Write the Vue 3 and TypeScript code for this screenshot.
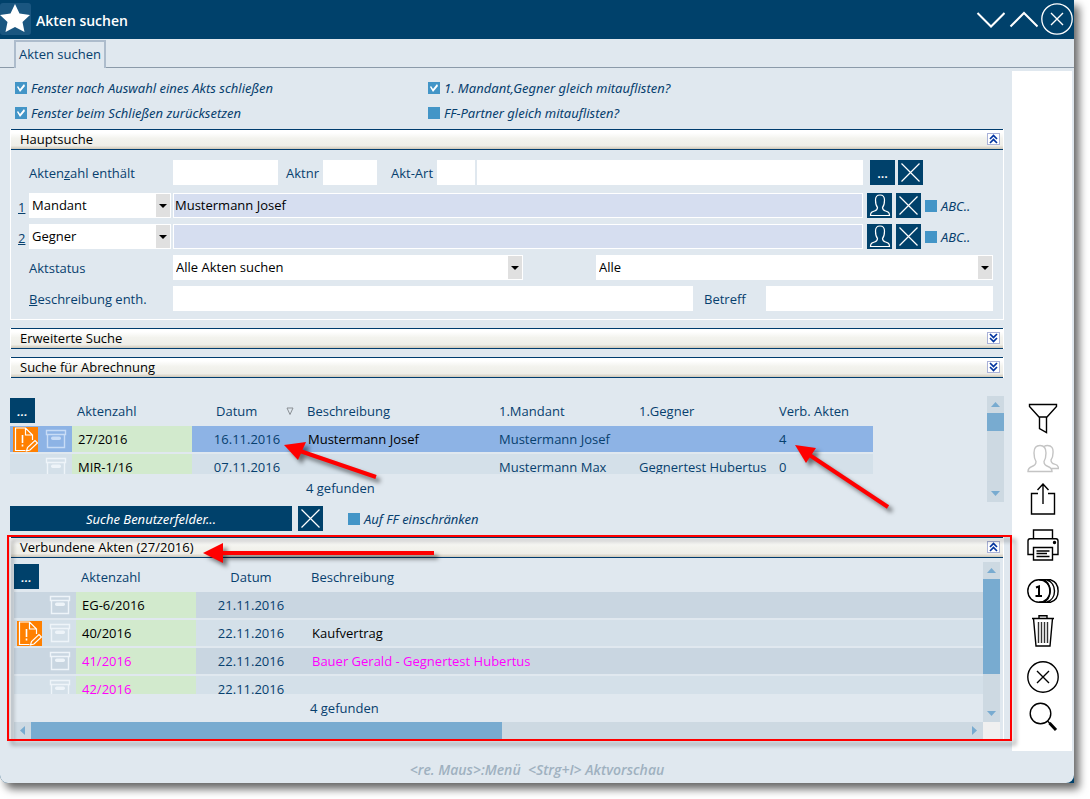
<script setup lang="ts">
import { ref } from 'vue'

interface CaseRow {
  no: string
  date: string
  text: string
  flagged: boolean
  related?: boolean
  client?: string
  opponent?: string
  links?: string
}

const closeAfterPick = ref(true)
const resetOnClose = ref(true)
const listParties = ref(true)
const listPartners = ref(false)
const limitToFf = ref(false)

const parties = ref([
  { key: '1', kind: 'Mandant', name: 'Mustermann Josef', abc: false },
  { key: '2', kind: 'Gegner', name: '', abc: false },
])

const results: CaseRow[] = [
  { no: '27/2016', date: '16.11.2016', text: 'Mustermann Josef', flagged: true, client: 'Mustermann Josef', opponent: '', links: '4' },
  { no: 'MIR-1/16', date: '07.11.2016', text: '', flagged: false, client: 'Mustermann Max', opponent: 'Gegnertest Hubertus', links: '0' },
]

const linked: CaseRow[] = [
  { no: 'EG-6/2016', date: '21.11.2016', text: '', flagged: false },
  { no: '40/2016', date: '22.11.2016', text: 'Kaufvertrag', flagged: true },
  { no: '41/2016', date: '22.11.2016', text: 'Bauer Gerald - Gegnertest Hubertus', flagged: false, related: true },
  { no: '42/2016', date: '22.11.2016', text: '', flagged: false, related: true },
]
</script>

<template>
  <div class="window">
    <svg class="defs" width="0" height="0" aria-hidden="true">
      <symbol id="cross" viewBox="0 0 25 25">
        <path d="M3.500 3.500 L21.500 21.500 M21.500 3.500 L3.500 21.500" fill="none" stroke="currentColor" stroke-width="1.200" />
      </symbol>
      <symbol id="person" viewBox="0 0 25 25">
        <path d="M3.500 22.500 C3.500 19.500 4.500 19 7.500 18 C10 17.200 10.500 16.500 10.500 14.500 C8.800 12.500 8.500 10 8.500 7 C8.500 3.500 10 2 13 2 C16 2 17.500 3.500 17.500 7 C17.500 10 17.200 12.500 15.500 14.500 C15.500 16.500 16 17.200 18.500 18 C21.500 19 22.500 19.500 22.500 22.500 Z" fill="none" stroke="currentColor" stroke-width="1.200" />
      </symbol>
      <symbol id="archive" viewBox="0 0 22 22">
        <path d="M1.500 2.500 H20.500 V6.500 H1.500 Z M2.500 6.500 V19.500 H19.500 V6.500" fill="none" stroke="currentColor" stroke-width="1.400" />
        <rect x="6" y="8.500" width="10" height="3.500" rx="1.700" fill="currentColor" />
      </symbol>
      <symbol id="alert" viewBox="0 0 25 25">
        <rect width="25" height="25" fill="#ff8000" />
        <path d="M12.500 23.500 H2.500 V1 H12.500 L19.500 8 V13 M12.500 1 V8 H19.500 M13.500 24 L14.500 20.500 L22 13.500 L24.500 16 L17 23 Z" fill="none" stroke="#fff" stroke-width="1.200" />
        <path d="M9.500 8 V16 M9.500 17.500 V19.500" stroke="#fff" stroke-width="1.600" />
      </symbol>
      <symbol id="up" viewBox="0 0 11 10">
        <path d="M2 5 L5.500 1.500 L9 5 M2 9 L5.500 5.500 L9 9" fill="none" stroke="#0033a0" stroke-width="1.700" />
      </symbol>
      <symbol id="down" viewBox="0 0 11 10">
        <path d="M2 1 L5.500 4.500 L9 1 M2 5 L5.500 8.500 L9 5" fill="none" stroke="#0033a0" stroke-width="1.700" />
      </symbol>
      <symbol id="drop" viewBox="0 0 14 23">
        <rect width="14" height="23" fill="#e0e0e0" />
        <path d="M3 10 H11 L7 14 Z" fill="#000" />
      </symbol>
    </svg>

    <header class="title">
      <span class="star">
        <svg width="31" height="32" viewBox="0 0 31 32" aria-hidden="true">
          <path d="M15 1 L19.500 10.500 L30 12 L22.500 19 L24.500 29 L15 24 L5.500 29 L7.500 19 L0 12 L10.500 10.500 Z" fill="#fff" />
        </svg>
      </span>
      <h1>Akten suchen</h1>
      <button type="button" class="sys" aria-label="Nach unten">
        <svg width="30" height="32" viewBox="0 0 30 32"><path d="M2.500 10 L16 23.500 L29.500 10" fill="none" stroke="#fff" stroke-width="2" /></svg>
      </button>
      <button type="button" class="sys" aria-label="Nach oben">
        <svg width="30" height="32" viewBox="0 0 30 32"><path d="M2.500 23.500 L16 10 L29.500 23.500" fill="none" stroke="#fff" stroke-width="2" /></svg>
      </button>
      <button type="button" class="sys" aria-label="Schließen">
        <svg width="32" height="32" viewBox="0 0 32 32"><circle cx="16" cy="16" r="15.200" fill="none" stroke="#fff" stroke-width="1.300" /><path d="M10 10 L22 22 M22 10 L10 22" stroke="#fff" stroke-width="1.400" /></svg>
      </button>
    </header>

    <div class="client">
      <nav class="tabs"><button type="button" class="tab">Akten suchen</button></nav>

      <div class="body">
        <main>
          <div class="options">
            <label><input v-model="closeAfterPick" type="checkbox"><span>Fenster nach Auswahl eines Akts schließen</span></label>
            <label><input v-model="listParties" type="checkbox"><span>1. Mandant,Gegner gleich mitauflisten?</span></label>
            <label><input v-model="resetOnClose" type="checkbox"><span>Fenster beim Schließen zurücksetzen</span></label>
            <label><input v-model="listPartners" type="checkbox"><span>FF-Partner gleich mitauflisten?</span></label>
          </div>

          <section class="panel search">
            <h2>Hauptsuche<button type="button" aria-label="Zuklappen"><svg width="11" height="10"><use href="#up" /></svg></button></h2>
            <form class="form" @submit.prevent>
              <div class="row top">
                <label class="name" for="caseno">Akten<u>z</u>ahl enthält</label>
                <input id="caseno" class="w105" type="text">
                <label class="mid" for="aktnr">Aktnr</label>
                <input id="aktnr" class="w54" type="text">
                <label class="mid art" for="aktart">Akt-Art</label>
                <input id="aktart" class="w38" type="text">
                <input class="grow second" type="text" aria-label="Akt-Art Bezeichnung">
                <div class="tools first">
                  <button type="button" class="square" aria-label="Auswählen">...</button>
                  <button type="button" class="square" aria-label="Leeren"><svg width="25" height="25"><use href="#cross" /></svg></button>
                </div>
              </div>
              <div v-for="p in parties" :key="p.key" class="row party">
                <a href="#" class="key">{{ p.key }}</a>
                <span class="select kind">
                  <select v-model="p.kind" :aria-label="'Beteiligter ' + p.key"><option>Mandant</option><option>Gegner</option></select>
                  <svg width="14" height="23"><use href="#drop" /></svg>
                </span>
                <input v-model="p.name" class="grow tinted" type="text" :aria-label="'Name ' + p.kind">
                <div class="tools">
                  <button type="button" class="square" aria-label="Person wählen"><svg width="25" height="25"><use href="#person" /></svg></button>
                  <button type="button" class="square" aria-label="Leeren"><svg width="25" height="25"><use href="#cross" /></svg></button>
                  <label class="abc"><input v-model="p.abc" type="checkbox">ABC..</label>
                </div>
              </div>
              <div class="row wide">
                <label class="name" for="status">Aktstatus</label>
                <span class="select status">
                  <select id="status"><option>Alle Akten suchen</option></select>
                  <svg width="14" height="23"><use href="#drop" /></svg>
                </span>
                <span class="select all">
                  <select aria-label="Art"><option>Alle</option></select>
                  <svg width="14" height="23"><use href="#drop" /></svg>
                </span>
              </div>
              <div class="row wide">
                <label class="name" for="descr"><u>B</u>eschreibung enth.</label>
                <input id="descr" class="descr" type="text">
                <label class="subject" for="subject">Betreff</label>
                <input id="subject" class="subject-input" type="text">
              </div>
            </form>
          </section>

          <section class="panel">
            <h2>Erweiterte Suche<button type="button" aria-label="Aufklappen"><svg width="11" height="10"><use href="#down" /></svg></button></h2>
          </section>
          <section class="panel">
            <h2>Suche für Abrechnung<button type="button" aria-label="Aufklappen"><svg width="11" height="10"><use href="#down" /></svg></button></h2>
          </section>

          <div class="results">
            <div class="list">
              <div class="clip short">
                <table class="narrow">
                  <colgroup><col class="c-icon"><col class="c-icon"><col class="c-no"><col class="c-date"><col class="c-text"><col class="c-name"><col class="c-name"><col></colgroup>
                  <thead>
                    <tr>
                      <th colspan="2" class="pick"><button type="button" class="square it" aria-label="Spalten">...</button></th>
                      <th>Aktenzahl</th>
                      <th class="sorted"><span>Datum<svg width="8" height="9" viewBox="0 0 8 9"><path d="M1 1 H7 L4 7.500 Z" fill="none" stroke="#8a8f94" /></svg></span></th>
                      <th>Beschreibung</th><th>1.Mandant</th><th>1.Gegner</th><th>Verb. Akten</th>
                    </tr>
                  </thead>
                  <tbody>
                    <tr v-for="(r, i) in results" :key="r.no" :class="{ selected: i === 0 }">
                      <td class="flag"><svg v-if="r.flagged" width="25" height="25"><use href="#alert" /></svg></td>
                      <td class="box"><svg width="22" height="22"><use href="#archive" /></svg></td>
                      <td class="no">{{ r.no }}</td>
                      <td class="date">{{ r.date }}</td>
                      <td class="dark">{{ r.text }}</td>
                      <td>{{ r.client }}</td>
                      <td>{{ r.opponent }}</td>
                      <td>{{ r.links }}</td>
                    </tr>
                  </tbody>
                </table>
              </div>
              <p class="count">4 gefunden</p>
            </div>
            <div class="vbar">
              <svg width="17" height="17"><path d="M4 11 L8.500 6 L13 11 Z" fill="#78abd0" /></svg>
              <i class="thumb small"></i>
              <svg class="end" width="17" height="17"><path d="M4 6 L8.500 11 L13 6 Z" fill="#78abd0" /></svg>
            </div>
          </div>

          <div class="custom">
            <button type="button" class="fields">Suche Benutzerfelder...</button>
            <button type="button" class="square" aria-label="Leeren"><svg width="25" height="25"><use href="#cross" /></svg></button>
            <label><input v-model="limitToFf" type="checkbox">Auf FF einschränken</label>
          </div>

          <section class="panel linked">
            <h2>Verbundene Akten (27/2016)<button type="button" aria-label="Zuklappen"><svg width="11" height="10"><use href="#up" /></svg></button></h2>
            <div class="scroller">
              <div class="list">
                <div class="clip tall">
                  <table>
                    <colgroup><col class="c-icon"><col class="c-icon"><col class="c-no"><col class="c-date"><col></colgroup>
                    <thead>
                      <tr>
                        <th colspan="2" class="pick"><button type="button" class="square it" aria-label="Spalten">...</button></th>
                        <th>Aktenzahl</th><th class="date">Datum</th><th>Beschreibung</th>
                      </tr>
                    </thead>
                    <tbody class="striped">
                      <tr v-for="r in linked" :key="r.no" :class="{ related: r.related }">
                        <td class="flag"><svg v-if="r.flagged" width="25" height="25"><use href="#alert" /></svg></td>
                        <td class="box"><svg width="22" height="22"><use href="#archive" /></svg></td>
                        <td class="no">{{ r.no }}</td>
                        <td class="date">{{ r.date }}</td>
                        <td class="dark">{{ r.text }}</td>
                      </tr>
                    </tbody>
                  </table>
                </div>
                <p class="count">4 gefunden</p>
              </div>
              <div class="vbar">
                <svg width="17" height="17"><path d="M4 11 L8.500 6 L13 11 Z" fill="#78abd0" /></svg>
                <i class="thumb large"></i>
                <svg class="end" width="17" height="17"><path d="M4 6 L8.500 11 L13 6 Z" fill="#78abd0" /></svg>
              </div>
              <div class="hbar">
                <svg width="17" height="17"><path d="M11 4 L6 8.500 L11 13 Z" fill="#78abd0" /></svg>
                <i class="thumb"></i>
                <svg class="end" width="17" height="17"><path d="M6 4 L11 8.500 L6 13 Z" fill="#78abd0" /></svg>
              </div>
              <div class="corner"></div>
            </div>
            <div class="frame"></div>
          </section>
        </main>

        <aside>
          <div class="group">
            <button type="button" aria-label="Filter"><svg width="32" height="32" viewBox="0 0 32 32"><path d="M2.500 1.500 H29.500 V3.500 L20 14 H12 L2.500 3.500 Z M12.500 14 V25.500 L19.500 29.500 V14" /></svg></button>
            <button type="button" aria-label="Personen" class="off"><svg width="32" height="32" viewBox="0 0 32 32"><path d="M1 28.500 C1 25.500 2 24.500 5 23.500 C8 22.500 9 21.500 9 18.500 C7.500 16 7 13 7 10 C7 5 9 2.500 13 2.500 C17 2.500 19 5 19 10 C19 13 18.500 16 17 18.500 C17 21.500 18 22.500 21 23.500 C24 24.500 25 25.500 25 28.500 Z M17 3.500 C18 2.800 19 2.500 20.500 2.500 C24.500 2.500 26.500 5 26 10 C26 13 25.500 15 24 17 C24 19.500 25 20.500 27.500 21.200 C30.500 22 31.500 23.500 31.500 25.500 H24.500" /></svg></button>
            <button type="button" aria-label="Exportieren"><svg width="32" height="32" viewBox="0 0 32 32"><path d="M11 10.500 H4.500 V31 H27.500 V10.500 H21 M16 21 V1 M10.500 7 L16 1 L21.500 7" /></svg></button>
          </div>
          <div class="group">
            <button type="button" aria-label="Drucken"><svg width="32" height="32" viewBox="0 0 32 32"><path d="M6.500 9.500 V1 H25.500 V9.500 M6 25.500 H1 V12 C1 10.500 2 9.800 3 9.800 H29 C30 9.800 31 10.500 31 12 V25.500 H26 M6.500 18.500 H25.500 V31 H6.500 Z M9.500 22 H22.500 M9.500 24.500 H20 M9.500 27.500 H22.500" /><circle cx="27.500" cy="13.500" r="1" fill="#000" /></svg></button>
          </div>
          <div class="group">
            <button type="button" aria-label="Buchungen"><svg width="32" height="32" viewBox="0 0 32 32"><circle cx="12" cy="16" r="11.200" /><path d="M16.500 5 C25 8 25 24 16.500 27 M20 5 C30 8 30 24 20 27 M24 5 C33.500 8 33.500 24 24 27 M12 4.800 H24 M12 27.200 H24" /><path d="M9 12.500 L12 11.500 V20.500 M8.500 21 H15" stroke-width="2" /></svg></button>
            <button type="button" aria-label="Löschen"><svg width="32" height="32" viewBox="0 0 32 32"><path d="M5 3.500 H27 M12 3.500 V0.800 H20 V3.500 M6.500 3.500 L9 31 H23 L25.500 3.500" /><path d="M11.500 7 V28 M14.500 7 V28 M17.500 7 V28 M20.500 7 V28" stroke="#333" /></svg></button>
          </div>
          <div class="group">
            <button type="button" aria-label="Abbrechen"><svg width="32" height="32" viewBox="0 0 32 32"><circle cx="16" cy="16" r="15.200" /><path d="M10 10 L22 22 M22 10 L10 22" /></svg></button>
            <button type="button" aria-label="Suchen"><svg width="32" height="32" viewBox="0 0 32 32"><circle cx="13.500" cy="12.500" r="10.300" /><path d="M20.500 20 L23 22.500" /><path d="M22.500 22 L29 29" stroke-width="3" /></svg></button>
          </div>
        </aside>
      </div>

      <footer>&lt;re. Maus&gt;:Menü&nbsp; &lt;Strg+I&gt; Aktvorschau</footer>
    </div>

    <svg class="arrows" width="900" height="580" viewBox="0 0 900 580" aria-hidden="true">
      <g fill="#f00" stroke="#f00">
        <path d="M300 451 L376 477" stroke-width="4" /><path d="M284 445 L306 442 L298 460 Z" stroke="none" />
        <path d="M808 454 L888 507" stroke-width="4" /><path d="M795 445 L816 448 L806 463 Z" stroke="none" />
        <path d="M220 553 H434" stroke-width="4" /><path d="M203 553 L223 543 V563 Z" stroke="none" />
      </g>
    </svg>
  </div>
</template>

<style>
body {
  background: #fff;
}
</style>

<style scoped>
.window {
  position: relative;
  margin: 0 16px 16px 0;
  background: #00416b;
  border-radius: 0 0 0 8px;
  box-shadow: 5px 6px 8px rgba(0, 0, 0, 0.6);
  color: #07406e;
  font: 13px/18px "Open Sans", "Noto Sans", sans-serif;
}
.window *,
.window *::before,
.window *::after {
  box-sizing: border-box;
}
.defs,
.arrows {
  position: absolute;
  top: 0;
  left: 0;
  pointer-events: none;
}
.arrows {
  z-index: 3;
  filter: drop-shadow(4px 4px 2px rgba(0, 0, 0, 0.5));
}
svg {
  display: block;
}
button,
input,
select {
  margin: 0;
  padding: 0;
  border: 0;
  border-radius: 0;
  font: inherit;
  color: inherit;
}
button {
  background: none;
  cursor: pointer;
}
h1,
h2,
p {
  margin: 0;
  font: inherit;
}
.title {
  display: flex;
  align-items: center;
  gap: 3px;
  height: 39px;
  padding: 0 1px 1px 0;
  color: #fff;
}
.star {
  background: #1a5680;
  border-radius: 3px;
}
.title h1 {
  flex: 1;
  padding: 4px 0 0 2px;
  font-size: 14px;
  font-weight: 600;
}
.client {
  background: #e0e8ef;
  border-radius: 0 0 8px 8px;
}
.tabs {
  display: flex;
  height: 29px;
  padding: 1px 0 0 14px;
  border-bottom: 1px solid #8b9aa9;
}
.tab {
  height: 28px;
  padding: 0 3px 2px;
  border: 2px solid #adbccc;
  border-bottom: 0;
  background: #e0e8ef;
}
.body {
  display: flex;
  padding-right: 2px;
}
main {
  flex: 1;
  min-width: 0;
  padding: 8px 8px 0 10px;
}
.options {
  display: grid;
  grid-template-columns: 413px 1fr;
  grid-auto-rows: 25px;
  margin-bottom: 3px;
  padding-left: 5px;
}
.options label,
.custom label,
.abc {
  display: flex;
  align-items: center;
  gap: 4px;
  font-family: "Noto Sans", "Open Sans", sans-serif;
  font-style: italic;
}
.options label {
  padding-bottom: 1px;
}
input[type="checkbox"] {
  appearance: none;
  width: 12px;
  height: 12px;
  background: #4395c7;
}
input[type="checkbox"]:checked::after {
  content: "";
  display: block;
  width: 12px;
  height: 12px;
  background: #fff;
  clip-path: polygon(2px 5px, 3px 4px, 5px 7px, 9px 2px, 10px 4px, 5px 10px);
}
.panel {
  position: relative;
  margin-bottom: 8px;
  border: solid #fff;
  border-width: 0 1px;
}
.panel h2 {
  display: flex;
  align-items: center;
  justify-content: space-between;
  height: 21px;
  padding: 0 3px 2px 9px;
  border: solid #003c6e;
  border-width: 1px 0;
  background: linear-gradient(#fff 0 15%, #f3f3ee 45%, #efeee8 82%, #cfc8b9);
  color: #000;
}
.panel h2 button {
  border: 1px solid #a9b1d8;
  background: #fff;
}
.search {
  border-bottom-width: 1px;
}
.form {
  display: flex;
  flex-direction: column;
  gap: 6px;
  padding: 10px 0 8px;
}
.row {
  display: flex;
  align-items: center;
  padding-left: 18px;
}
.row.top {
  margin-bottom: 2px;
}
.row > input {
  height: 25px;
  min-width: 0;
  padding: 0 2px 2px;
  background: #fff;
  color: #000;
}
.row > input.tinted {
  margin-left: 2px;
  border: 1px solid #fff;
  background: #d6def0;
  padding: 0 1px 2px;
}
.name {
  width: 144px;
}
.mid {
  width: 45px;
  padding-left: 8px;
}
.art {
  width: 60px;
  padding-left: 14px;
}
.w105 {
  width: 105px;
}
.w54 {
  width: 54px;
}
.w38 {
  width: 38px;
}
.grow {
  flex: 1;
}
.second {
  margin-left: 2px;
}
.tools {
  display: flex;
  gap: 4px;
  width: 140px;
  padding-left: 4px;
}
.tools.first {
  gap: 3px;
  padding-left: 7px;
}
.square {
  display: block;
  width: 25px;
  height: 25px;
  background: #00416b;
  color: #fff;
  font-weight: 600;
}
.it {
  font-style: italic;
}
.party {
  padding-left: 7px;
}
.key {
  width: 11px;
  padding-top: 2px;
  color: inherit;
}
.select {
  position: relative;
  display: block;
  height: 25px;
}
.select select {
  appearance: none;
  width: 100%;
  height: 25px;
  padding: 0 18px 2px 3px;
  background: #fff;
  color: #000;
}
.select svg {
  position: absolute;
  top: 1px;
  right: 1px;
  pointer-events: none;
}
.kind {
  width: 142px;
}
.wide {
  padding-right: 10px;
}
.status {
  width: 350px;
}
.all {
  flex: 1;
  margin-left: 73px;
}
.descr {
  flex: 1 1 520px;
}
.subject {
  width: 73px;
  padding-left: 11px;
}
.subject-input {
  flex: 1 1 227px;
}
.results {
  display: flex;
  margin-top: 18px;
}
.list {
  flex: 1;
  min-width: 0;
  padding-top: 2px;
}
.clip {
  overflow: hidden;
}
.short {
  height: 76px;
}
.tall {
  height: 130px;
}
table {
  width: 100%;
  table-layout: fixed;
  border-collapse: separate;
  border-spacing: 0;
}
.narrow {
  width: 863px;
}
.c-icon {
  width: 31px;
}
.c-no {
  width: 120px;
}
.c-date {
  width: 110px;
}
.c-text {
  width: 192px;
}
.c-name {
  width: 140px;
}
th {
  height: 26px;
  padding: 0 5px;
  font-weight: 400;
  text-align: left;
  white-space: nowrap;
}
td {
  height: 28px;
  padding: 0 0 0 5px;
  border-top: 2px solid #e0e8ef;
  background: #d4e0e9;
  white-space: nowrap;
}
th.pick {
  padding: 0;
  vertical-align: top;
}
th.sorted {
  padding: 0 8px 0 24px;
}
.sorted span {
  display: flex;
  align-items: center;
  justify-content: space-between;
}
th.date,
td.date {
  padding: 0;
  text-align: center;
}
td.flag {
  padding: 0 0 0 3px;
}
td.box {
  padding: 0 0 0 4px;
  color: #eef4f9;
}
.striped tr:nth-child(odd) td {
  background: #c9d6e1;
}
.selected td {
  background: #8db3e5;
}
.selected td.box {
  color: #c8dcf6;
}
tbody tr td.no,
.striped tr:nth-child(odd) td.no {
  padding-left: 6px;
  background: #d2eacd;
}
td.no,
td.dark {
  padding-left: 6px;
  color: #000;
}
tbody tr.related td.no,
tbody tr.related td.dark {
  color: #f0f;
}
.count {
  height: 28px;
  padding: 5px 0 0 296px;
}
.vbar {
  display: flex;
  flex-direction: column;
  width: 17px;
  background: #cdd9e2;
}
.vbar .end {
  margin-top: auto;
}
.thumb {
  background: #78abd0;
}
.thumb.small {
  height: 18px;
}
.thumb.large {
  height: 95px;
}
.custom {
  display: flex;
  margin: 4px 0 6px;
}
.fields {
  width: 282px;
  height: 25px;
  margin-right: 6px;
  background: #00416b;
  color: #fff;
  font-family: "Noto Sans", "Open Sans", sans-serif;
  font-style: italic;
}
.custom label {
  margin-left: 25px;
}
.linked {
  margin-bottom: 11px;
}
.scroller {
  display: grid;
  grid-template-columns: 1fr 17px;
  grid-template-rows: 160px 17px;
  padding: 4px 3px 1px;
}
.hbar {
  display: flex;
  background: #cdd9e2;
}
.hbar .thumb {
  width: 48.6%;
}
.hbar .end {
  margin-left: auto;
}
.corner {
  background: #f0f0f0;
}
.frame {
  position: absolute;
  z-index: 2;
  inset: -2px -9px -1px -4px;
  border: 2px solid #f00;
  filter: drop-shadow(4px 4px 2px rgba(0, 0, 0, 0.4));
  pointer-events: none;
}
aside {
  display: flex;
  flex-direction: column;
  justify-content: flex-end;
  gap: 14px;
  width: 60px;
  margin-top: 3px;
  padding: 0 13px 18px 15px;
  background: #fff;
}
.group {
  display: flex;
  flex-direction: column;
  align-items: center;
  gap: 8px;
}
aside svg {
  fill: none;
  stroke: #000;
  stroke-width: 1.4;
}
aside .off svg {
  stroke: #c4c4c4;
}
footer {
  height: 32px;
  padding-top: 10px;
  color: #9fb1c0;
  font-size: 14px;
  font-style: italic;
  font-weight: 600;
  text-align: center;
}
</style>
